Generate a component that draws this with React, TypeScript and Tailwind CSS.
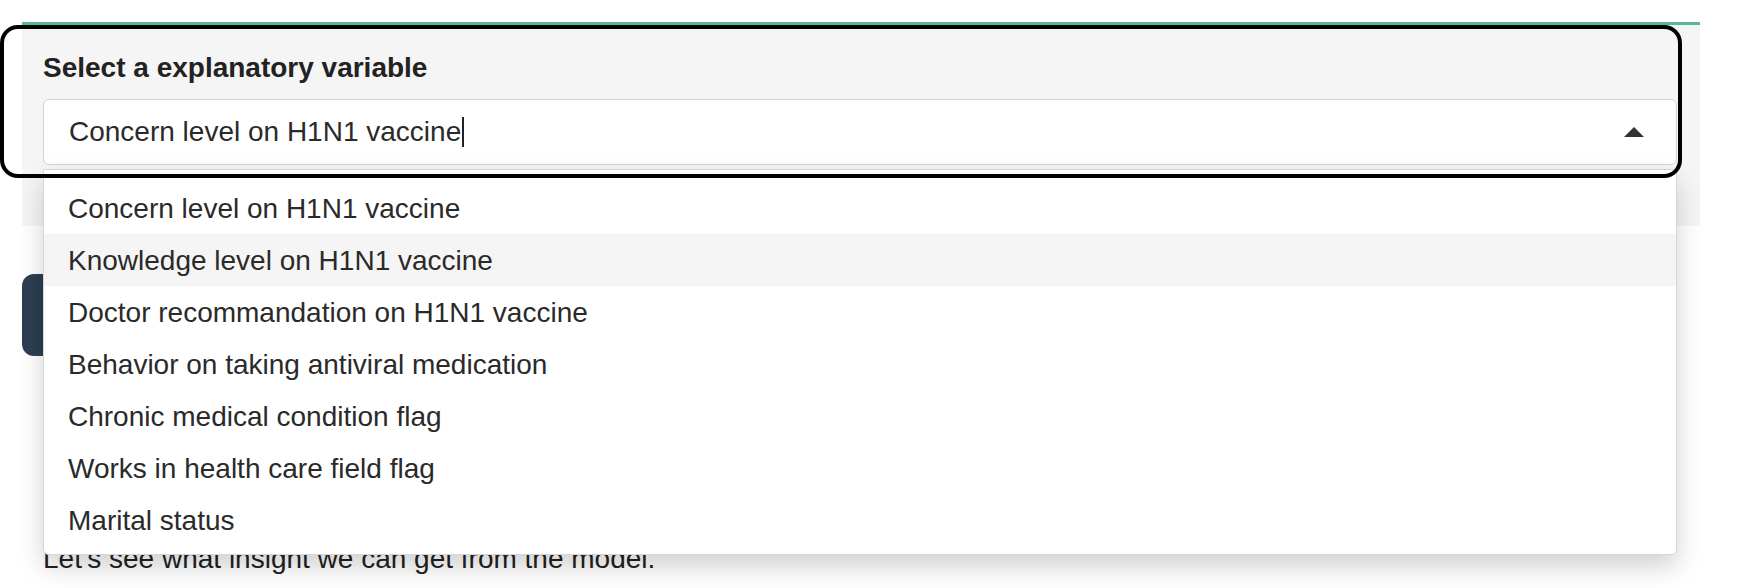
import { useState } from 'react'

const options = [
  'Concern level on H1N1 vaccine',
  'Knowledge level on H1N1 vaccine',
  'Doctor recommandation on H1N1 vaccine',
  'Behavior on taking antiviral medication',
  'Chronic medical condition flag',
  'Works in health care field flag',
  'Marital status',
]

export default function App() {
  const [value] = useState(options[0])
  const [hovered, setHovered] = useState(1)

  return (
    <div className="relative h-[588px] w-full overflow-hidden bg-white font-['Liberation_Sans',Arial,sans-serif] text-[#222]">
      {/* Input panel */}
      <section className="ml-[22px] mt-[22px] h-[204px] w-[1678px] border-t-[3px] border-[#58b89a] bg-[#f5f5f5] pl-[21px] pr-[23px] pt-[27px]">
        <label className="block text-[28px] font-bold leading-[32px] text-[#222]" htmlFor="var-select">
          Select a explanatory variable
        </label>

        <div className="relative mt-[15px]">
          <div
            id="var-select"
            className="flex h-[66px] items-center justify-between rounded-[6px] border border-[#cfd4d9] bg-white pl-[25px] pr-[32px]"
          >
            <span className="flex items-center text-[28px] leading-[32px] text-[#2a2a2a]">
              {value}
              <span className="ml-[1px] inline-block h-[30px] w-[2px] bg-[#222]" />
            </span>
            <svg width="20" height="10" viewBox="0 0 20 10">
              <polygon points="0,10 20,10 10,0" fill="#333" />
            </svg>
          </div>

          {/* Dropdown menu */}
          <div className="absolute left-0 right-0 top-[70px] z-10 rounded-b-[6px] border border-[#d6d6d6] bg-white pb-[8px] pt-[12px] shadow-[0_12px_26px_rgba(0,0,0,0.18)]">
            {options.map((opt, i) => (
              <div
                key={opt}
                onMouseEnter={() => setHovered(i)}
                className={`flex h-[52px] items-center pl-[24px] pt-[2px] text-[28px] leading-[32px] text-[#2a2a2a] ${i === hovered ? 'bg-[#f5f5f5]' : ''}`}
              >
                {opt}
              </div>
            ))}
          </div>
        </div>
      </section>

      {/* Button hidden behind menu */}
      <button className="ml-[22px] mt-[48px] block h-[82px] w-[420px] rounded-[12px] bg-[#2c3e50]" />

      <p className="ml-[43px] mt-[183px] text-[28px] leading-[40px] text-[#222]">
        Let's see what insight we can get from the model.
      </p>

      {/* Focus ring */}
      <div className="pointer-events-none absolute left-0 top-[25px] z-20 h-[153px] w-[1682px] rounded-[18px] border-[4px] border-black" />
    </div>
  )
}
